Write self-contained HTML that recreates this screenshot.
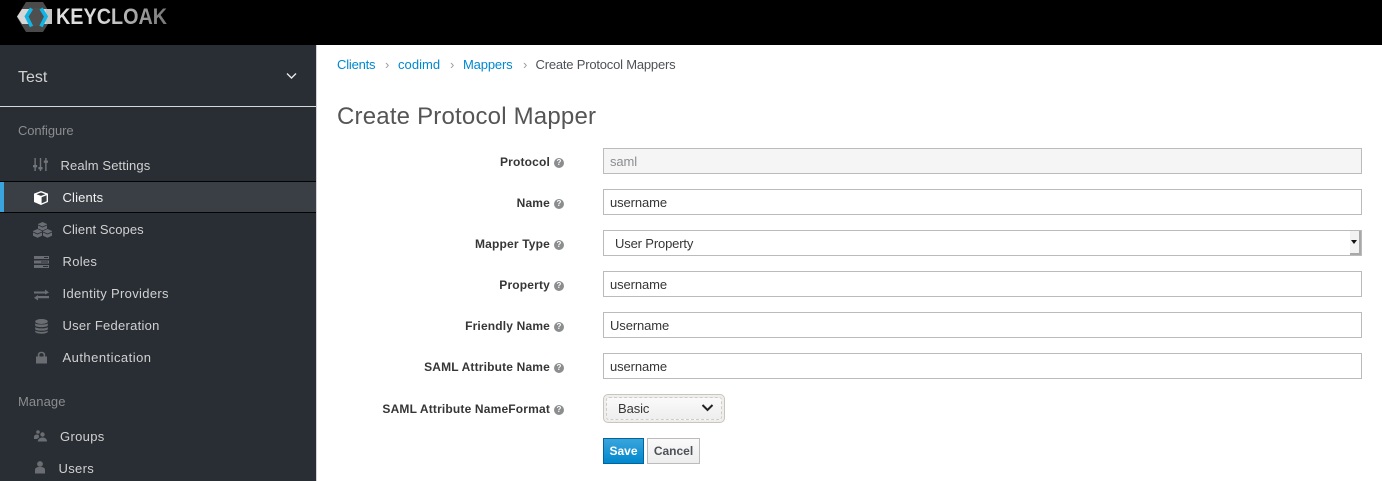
<!DOCTYPE html>
<html><head><meta charset="utf-8"><style>
html,body{margin:0;padding:0}
body{width:1382px;height:481px;overflow:hidden;position:relative;background:#fff;font-family:"Liberation Sans",sans-serif;font-size:13px;color:#363636}
.a{position:absolute;white-space:nowrap}
.n{color:#d1d1d1;line-height:18px;height:18px}
.lab{position:absolute;right:818px;font-weight:bold;line-height:18px;height:18px;white-space:nowrap;font-size:12px;letter-spacing:.17px;color:#363636}
.q{display:inline-block;width:10px;height:10px;border-radius:50%;background:#8b8d8f;color:#fff;font-size:8px;line-height:10px;text-align:center;margin-left:4px;vertical-align:1px;font-weight:bold;letter-spacing:0}
.inp{position:absolute;left:603px;width:757px;height:24px;border:1px solid #bbb;line-height:26px;padding:0;background:#fff;color:#363636;box-sizing:content-box}
.inp span{position:absolute;left:6px;top:0;letter-spacing:-.1px;white-space:nowrap}
svg{position:absolute}
</style></head><body>
<div class="a" style="left:0;top:0;width:1382px;height:45px;background:#000"></div>
<svg style="left:16px;top:1px" width="40" height="32" viewBox="0 0 40 32"><polygon points="10,1 27,1 32,9 36,9 36,23 32,23 27,31 10,31 5,23 1,16 5,9" fill="#4a4a4a"/><polygon points="1,15.500 6,8 36,8 36,23 6,23" fill="#d6d6d6"/><polygon points="30,8 36,8 36,23 30,23" fill="#c4c4c4"/><polygon points="14,7 25,7 29,15.500 25,25 14,25 10,15.500" fill="#4f4f4f"/><path d="M15.500 7.500 L10.500 15.500 L15.500 25.500" stroke="#0fb5e4" stroke-width="3.600" fill="none"/><path d="M25 7.500 L30 15.500 L25 25.500" stroke="#0fb5e4" stroke-width="3.600" fill="none"/></svg>
<div class="a" style="left:56px;top:3px;font-size:22px;line-height:28px;font-weight:bold;transform:scaleX(.9);transform-origin:left top;background:linear-gradient(90deg,#e0e0e0 0%,#d8d8d8 40%,#777 100%);-webkit-background-clip:text;background-clip:text;color:transparent">KEYCLOAK</div>

<div class="a" style="left:0;top:45px;width:316px;height:436px;background:#292e34"></div>
<div class="a" style="left:316px;top:45px;width:1px;height:436px;background:#d1d1d1"></div>
<div class="a" style="left:0;top:106px;width:316px;height:1px;background:#d8d8d8"></div>
<div class="a" style="left:18px;top:68px;font-size:16px;line-height:20px;color:#d1d1d1;letter-spacing:0">Test</div>
<svg style="left:286px;top:72px" width="11" height="8" viewBox="0 0 11 8"><path d="M1 1.500 L5.500 6 L10 1.500" stroke="#e8e8e8" stroke-width="1.400" fill="none"/></svg>

<div class="a n" style="left:18px;top:122px;color:#8b8d8f;letter-spacing:-.1px">Configure</div>
<div class="a" style="left:0;top:181px;width:316px;height:32px;background:#393f44;border-top:1px solid #030303;border-bottom:1px solid #030303;box-sizing:border-box"></div>
<div class="a" style="left:0;top:182px;width:4px;height:30px;background:#39a5dc"></div>

<svg style="left:33px;top:157px" width="15" height="15" viewBox="0 0 15 15" fill="#72767b"><rect x="1.400" y="1" width="1.400" height="13"/><rect x="6.800" y="1" width="1.400" height="13"/><rect x="12.200" y="1" width="1.400" height="13"/><rect x="0" y="8" width="4.200" height="2.400" rx=".6"/><rect x="5.400" y="10" width="4.200" height="2.400" rx=".6"/><rect x="10.800" y="3.500" width="4.200" height="2.400" rx=".6"/></svg>
<div class="a n" style="left:60.500px;top:156.500px;letter-spacing:.12px">Realm Settings</div>

<svg style="left:33px;top:190px" width="16" height="16" viewBox="0 0 16 16"><path d="M8 1 L15 3.600 V12 L8 15 L1 12 V3.600 Z" fill="#fff"/><path d="M8 2.500 L12.500 4.200 L8 5.900 L3.500 4.200 Z" fill="#393f44"/><path d="M8.600 7.200 L13.600 5.200 V11.300 L8.600 13.400 Z" fill="#393f44"/></svg>
<div class="a n" style="left:62.500px;top:188.500px;color:#f1f1f1;letter-spacing:.15px">Clients</div>

<svg style="left:33px;top:222px" width="19" height="16" viewBox="0 0 19 16" fill="#6a6e73"><path d="M9.500 0 L14 2 V6.500 L9.500 8.500 L5 6.500 V2 Z"/><path d="M4.500 7 L9 9 V13.800 L4.500 15.800 L0 13.800 V9 Z"/><path d="M14.500 7 L19 9 V13.800 L14.500 15.800 L10 13.800 V9 Z"/><path d="M5 3 L9.500 5 L14 3" stroke="#292e34" stroke-width=".8" fill="none"/><path d="M0 10 L4.500 12 L9 10 M10 10 L14.500 12 L19 10" stroke="#292e34" stroke-width=".8" fill="none"/></svg>
<div class="a n" style="left:62.500px;top:220.500px;letter-spacing:.08px">Client Scopes</div>

<svg style="left:34px;top:256px" width="15" height="12" viewBox="0 0 15 12" fill="#6a6e73"><path fill-rule="evenodd" d="M0 0H15V3H0Z M0 4.500H15V7.500H0Z M0 9H15V12H0Z M10 1H14V2H10Z M7 5.500H14V6.500H7Z M9 10H14V11H9Z"/></svg>
<div class="a n" style="left:62.500px;top:252.500px;letter-spacing:.3px">Roles</div>

<svg style="left:34px;top:289px" width="15" height="12" viewBox="0 0 15 12" fill="#6a6e73"><path d="M0 2.500H11V0.500L15 3.500L11 5.500V4.500H0Z M15 7H4V6L0 8.800L4 11.500V9.300H15Z"/></svg>
<div class="a n" style="left:62.500px;top:284.500px;letter-spacing:.33px">Identity Providers</div>

<svg style="left:35px;top:319px" width="13" height="15" viewBox="0 0 13 15" fill="#6a6e73"><ellipse cx="6.500" cy="2.500" rx="6.300" ry="2.500"/><path d="M.2 4.200C1.500 6 11.500 6 12.800 4.200V6.600C11.500 8.600 1.500 8.600 .2 6.600Z"/><path d="M.2 8C1.500 9.900 11.500 9.900 12.800 8V10.200C11.500 12.100 1.500 12.100 .2 10.200Z"/><path d="M.2 11.500C1.500 13.300 11.500 13.300 12.800 11.500V12.800C11.500 15.400 1.500 15.400 .2 12.800Z"/></svg>
<div class="a n" style="left:62.500px;top:316.500px;letter-spacing:.26px">User Federation</div>

<svg style="left:36px;top:351px" width="11" height="13" viewBox="0 0 11 13" fill="#6a6e73"><path d="M0 5.500H1.800V3.800C1.800 -.2 9.200 -.2 9.200 3.800V5.500H11V12.500H0Z M3.400 5.500H7.600V3.900C7.600 1.600 3.400 1.600 3.400 3.900Z" fill-rule="evenodd"/></svg>
<div class="a n" style="left:62.500px;top:348.500px;letter-spacing:.47px">Authentication</div>

<div class="a n" style="left:18px;top:392.500px;color:#8b8d8f;letter-spacing:.1px">Manage</div>

<svg style="left:34px;top:430px" width="13" height="12" viewBox="0 0 13 12" fill="#6a6e73"><circle cx="4" cy="2" r="1.800"/><circle cx="8.500" cy="4.500" r="2.200"/><path d="M0 6.500C.5 4.500 3 4 4.800 5L5 7.500L3 9H0Z"/><path d="M3.800 11.500C3.800 6.500 13 6 13 11.500Z"/></svg>
<div class="a n" style="left:60px;top:427.500px;letter-spacing:.33px">Groups</div>

<svg style="left:34px;top:461px" width="12" height="14" viewBox="0 0 12 14" fill="#6a6e73"><circle cx="6" cy="3" r="2.900"/><path d="M1 12.500V9C1 6.500 3 6 6 6S11 6.500 11 9V12.500Z"/></svg>
<div class="a n" style="left:58.500px;top:459.500px;letter-spacing:.33px">Users</div>

<div class="a" style="left:337px;top:55.500px;line-height:18px;color:#0088ce;letter-spacing:-.2px">Clients</div>
<div class="a" style="left:385px;top:55.500px;line-height:18px;color:#9c9c9c">›</div>
<div class="a" style="left:398px;top:55.500px;line-height:18px;color:#0088ce;letter-spacing:.05px">codimd</div>
<div class="a" style="left:450px;top:55.500px;line-height:18px;color:#9c9c9c">›</div>
<div class="a" style="left:463px;top:55.500px;line-height:18px;color:#0088ce;letter-spacing:-.15px">Mappers</div>
<div class="a" style="left:523px;top:55.500px;line-height:18px;color:#9c9c9c">›</div>
<div class="a" style="left:535.500px;top:55.500px;line-height:18px;color:#4d5258;letter-spacing:-.2px">Create Protocol Mappers</div>
<div class="a" style="left:337px;top:102px;font-size:24px;line-height:30px;color:#555;letter-spacing:.2px">Create Protocol Mapper</div>

<div class="lab" style="top:152.500px">Protocol<span class="q">?</span></div>
<div class="lab" style="top:193.500px">Name<span class="q">?</span></div>
<div class="lab" style="top:234.500px">Mapper Type<span class="q">?</span></div>
<div class="lab" style="top:275.500px">Property<span class="q">?</span></div>
<div class="lab" style="top:316.500px">Friendly Name<span class="q">?</span></div>
<div class="lab" style="top:357.500px">SAML Attribute Name<span class="q">?</span></div>
<div class="lab" style="top:399.500px">SAML Attribute NameFormat<span class="q">?</span></div>

<div class="inp" style="top:148px;background:#f5f5f5;color:#8b8d8f"><span>saml</span></div>
<div class="inp" style="top:189px"><span>username</span></div>
<div class="inp" style="top:230px"><span style="left:11px;letter-spacing:-.15px">User Property</span>
<div style="position:absolute;right:0;top:0;width:11px;height:24px;background:#f2f2f2;border-right:2px solid #a8a8a8;border-bottom:2px solid #a8a8a8;box-sizing:border-box"></div>
<div style="position:absolute;right:4px;top:9px;width:0;height:0;border-left:3px solid transparent;border-right:3px solid transparent;border-top:4px solid #111"></div></div>
<div class="inp" style="top:271px"><span>username</span></div>
<div class="inp" style="top:312px"><span>Username</span></div>
<div class="inp" style="top:353px"><span>username</span></div>

<div class="a" style="left:603px;top:394px;width:122px;height:29px;border:1px solid #c8c5c0;border-radius:5px;background:#f0eeeb;box-sizing:border-box"></div>
<div class="a" style="left:606px;top:397px;width:116px;height:23px;border:1px dashed #cfccc7;border-radius:3px;background:linear-gradient(#fafafa,#eeeeee);box-sizing:border-box"></div>
<div class="a" style="left:618px;top:400px;line-height:18px;color:#363636;letter-spacing:-.1px">Basic</div>
<svg style="left:701px;top:404px" width="13" height="8" viewBox="0 0 13 8"><path d="M1.500 1 L6.500 6 L11.500 1" stroke="#222" stroke-width="2" fill="none"/></svg>

<div class="a" style="left:603px;top:438px;width:41px;height:26px;background:linear-gradient(#39a5dc,#0088ce);border:1px solid #00659c;box-sizing:border-box;color:#fff;font-weight:bold;font-size:12px;line-height:25px;text-align:center">Save</div>
<div class="a" style="left:647px;top:438px;width:53px;height:26px;background:linear-gradient(#fafafa,#ededed);border:1px solid #bbb;box-sizing:border-box;color:#4d5258;font-weight:bold;font-size:12px;line-height:25px;text-align:center">Cancel</div>
</body></html>
